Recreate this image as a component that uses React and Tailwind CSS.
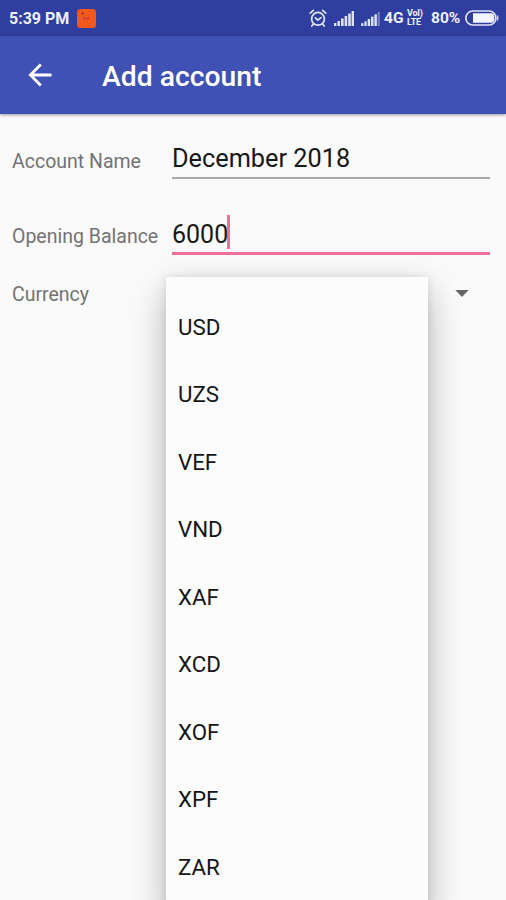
import React from 'react'

const currencies = ['USD', 'UZS', 'VEF', 'VND', 'XAF', 'XCD', 'XOF', 'XPF', 'ZAR']

const SignalIcon = ({ className, faded }) => (
  <svg viewBox="0 0 20 15" className={className} fill="#dfe3fb">
    <rect x="0" y="12" width="2.4" height="3" />
    <rect x="3.5" y="10" width="2.4" height="5" />
    <rect x="7" y="7.5" width="2.6" height="7.5" />
    <rect x="10.6" y="5" width="2.6" height="10" />
    <rect x="14.2" y="2.5" width="2.6" height="12.5" />
    <rect x="17.6" y="0" width="2.4" height="15" opacity={faded ? 0.4 : 1} />
  </svg>
)

const AlarmIcon = () => (
  <svg viewBox="0 0 18 18" className="w-[18px] h-[18px]" fill="none" stroke="#dfe3fb" strokeWidth="1.7" strokeLinecap="round">
    <circle cx="9" cy="9.8" r="6.4" />
    <path d="M1.2 4.2 4.4 1.4M16.8 4.2 13.6 1.4M4.2 15.2 2.8 17M13.8 15.2 15.2 17" />
    <path d="M6.3 8.8 8.8 11.2 12 8.6" />
  </svg>
)

const BatteryIcon = () => (
  <svg viewBox="0 0 34 16" className="w-[34px] h-4" fill="none">
    <rect x="0.9" y="1" width="30" height="14" rx="6.8" stroke="#dfe3fb" strokeWidth="1.7" />
    <path d="M8 3.2H26.5A3 3 0 0 1 29.3 6V10A3 3 0 0 1 26.5 12.8H8Z" fill="#f3f4ff" />
    <path d="M32.2 4.4Q35 8 32.2 11.6Z" fill="#dfe3fb" />
  </svg>
)

const StatusBar = () => (
  <div className="h-9 bg-[#303f9f] flex items-center text-[#eef0ff] text-[16px] font-bold whitespace-nowrap pl-[9px] pr-[7px]">
    <span className="w-[61px] pt-px">5:39 PM</span>
    <svg viewBox="0 0 19 19" className="w-[19px] h-[19px] ml-[7px]">
      <rect width="19" height="19" rx="3.5" fill="#f4581f" />
      <circle cx="5.6" cy="4.6" r="1" fill="#7c2c3c" />
      <path d="M6.5 7.8 9 9.2 12 7.8V11L9 9.8 6.5 11Z" fill="#c2403c" />
    </svg>
    <div className="ml-auto flex items-center">
      <AlarmIcon />
      <SignalIcon className="w-5 h-[15px] ml-[7px]" />
      <SignalIcon className="w-[19px] h-[14px] ml-[7px] mt-px" faded />
      <span className="ml-[4px] w-[20px] text-[15.5px] pt-px">4G</span>
      <span className="ml-[3px] w-[17px] flex flex-col text-[9px] leading-[9px] tracking-[-0.2px]">
        <span>VoI)</span>
        <span>LTE</span>
      </span>
      <span className="ml-[7px] w-[31px] text-[15.5px] pt-px">80%</span>
      <span className="ml-[3px]"><BatteryIcon /></span>
    </div>
  </div>
)

const AppBar = () => (
  <header className="h-[78px] bg-[#3f51b5] flex items-center pl-[28px] shadow-[0_1px_3px_rgba(0,0,0,0.4)]">
    <svg viewBox="0 0 24 24" className="w-6 h-6" fill="none" stroke="#fff" strokeWidth="2.8">
      <path d="M23.5 12H2.4M12.8 1.6 2.4 12 12.8 22.4" />
    </svg>
    <h1 className="ml-[50px] mt-[3px] text-[28.3px] leading-8 font-medium text-white">Add account</h1>
  </header>
)

const CurrencyMenu = () => (
  <ul className="absolute left-[166px] top-[277px] w-[262px] h-[640px] pt-[16.5px] bg-[#fcfcfc] shadow-[0_14px_34px_rgba(0,0,0,0.28),0_0_8px_rgba(0,0,0,0.1)]">
    {currencies.map(code => (
      <li key={code} className="h-[67.5px] pl-[12px] flex items-center text-[22.3px] text-[#151515]">
        {code}
      </li>
    ))}
  </ul>
)

const App = () => {
  return (
    <div className="relative w-[506px] h-[900px] overflow-hidden bg-[#fafafa] font-['Roboto',sans-serif]">
      <StatusBar />
      <AppBar />

      <main className="pl-3 pr-4 text-[19.5px] text-[#737373]">
        <div className="h-[65px] flex items-end">
          <label className="w-[160px] pb-[2px] leading-[30px]">Account Name</label>
          <div className="flex-1 h-[40px] border-b-2 border-[#a8a8a8] text-[25.3px] leading-[30px] text-[#181818] pt-[5px]">
            December 2018
          </div>
        </div>
        <div className="h-[76px] flex items-end">
          <label className="w-[160px] pb-[3px] leading-[30px] whitespace-nowrap">Opening Balance</label>
          <div className="flex-1 h-[40px] border-b-[3px] border-[#f06f98] flex items-start text-[25px] leading-[40px] text-[#181818]">
            <span className="w-[55px]">6000</span>
            <span className="w-[3px] h-[34px] bg-[#f06f98]" />
          </div>
        </div>
        <div className="h-[78px] flex items-center">
          <label className="w-[160px] pt-[2px]">Currency</label>
          <svg viewBox="0 0 14 7" className="w-[14px] h-[7px] ml-auto mr-[21px] mb-px" fill="#686868">
            <path d="M0.3 0H13.7L7 7Z" />
          </svg>
        </div>
      </main>

      {/* Open spinner list */}
      <CurrencyMenu />
    </div>
  )
}

export default App
